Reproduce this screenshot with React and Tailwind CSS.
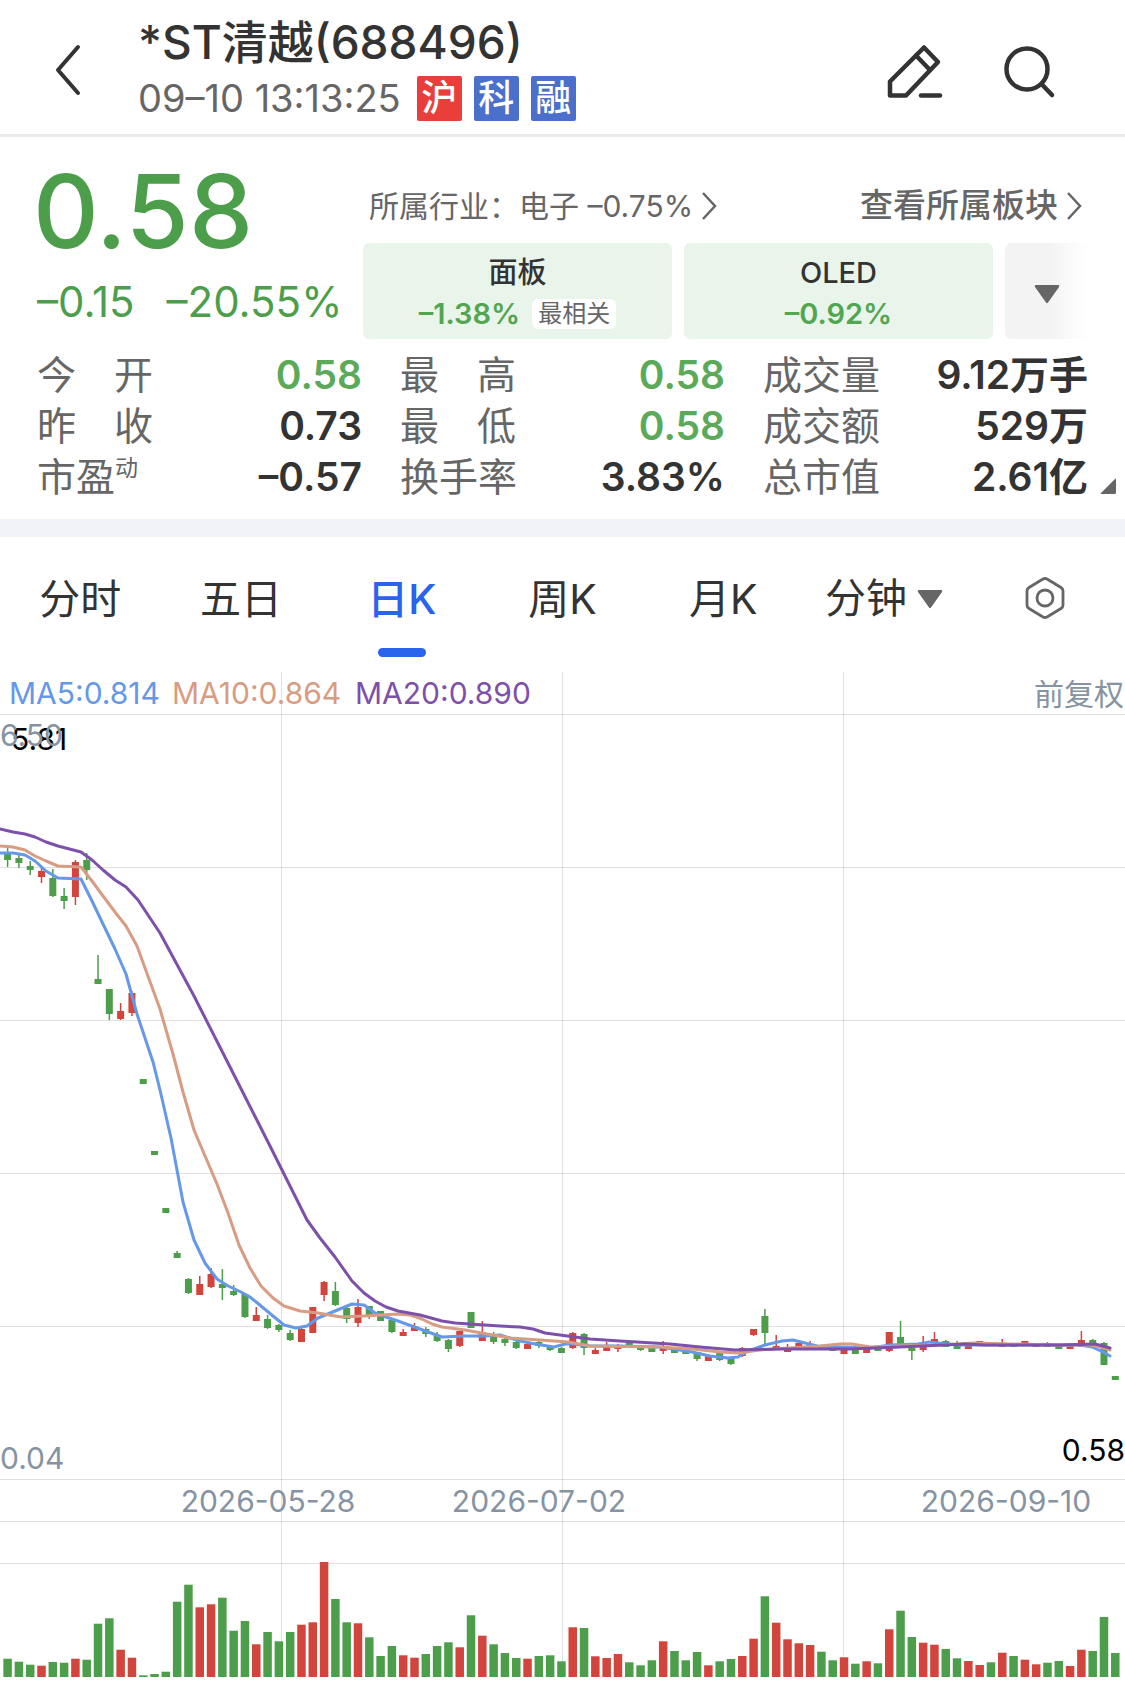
import React, { useState } from 'react';

const STEP = 11.303;
const FIRST_X = 7.6;
const VOLUME_BASE = 1005;

const quotes = [
  { label: ['今', '开'], value: '0.58', down: true },
  { label: ['最', '高'], value: '0.58', down: true },
  { label: ['成', '交', '量'], value: '9.12万手' },
  { label: ['昨', '收'], value: '0.73' },
  { label: ['最', '低'], value: '0.58', down: true },
  { label: ['成', '交', '额'], value: '529万' },
  { label: ['市', '盈'], sup: '动', value: '–0.57' },
  { label: ['换', '手', '率'], value: '3.83%' },
  { label: ['总', '市', '值'], value: '2.61亿' },
];

const tabs = ['分时', '五日', '日K', '周K', '月K'];

// direction, high, body top, body bottom, low, volume
const candles = [
  ['g', 176, 182, 188, 195, 18.3], ['g', 183, 186, 191, 196, 15.3], ['g', 189, 194, 198, 203, 12.3],
  ['r', 195, 199, 205, 211, 11.3], ['g', 197, 206, 224, 225, 15], ['g', 216, 224, 229, 237, 14.3],
  ['r', 188, 190, 225, 233, 18.3], ['g', 181, 188, 198, 208, 17.3], ['g', 283, 307, 312, 312, 53.3],
  ['g', 317, 317, 342, 348, 58.7], ['r', 331, 339, 347, 348, 27.3], ['r', 319, 321, 341, 344, 19.3],
  ['g', 407, 407, 412, 412, 1.7], ['g', 479, 479, 483, 483, 3], ['g', 536, 536, 541, 541, 5.3],
  ['g', 579, 581, 586, 586, 75.3], ['g', 606, 607, 621, 622, 92.3], ['r', 604, 612, 623, 623, 69.7],
  ['r', 596, 602, 615, 616, 72.7], ['g', 597, 612, 616, 628, 79.3], ['g', 613, 619, 623, 624, 46.3],
  ['g', 621, 622, 645, 646, 56], ['r', 635, 643, 649, 649, 32.7], ['g', 643, 647, 656, 657, 45],
  ['g', 652, 653, 658, 660, 35.7], ['g', 658, 661, 668, 669, 45], ['r', 656, 657, 670, 670, 52.3],
  ['r', 635, 635, 661, 661, 54.7], ['r', 609, 610, 623, 629, 115], ['g', 610, 619, 633, 634, 78],
  ['g', 635, 636, 647, 651, 54.7], ['r', 627, 635, 651, 655, 53.7], ['g', 634, 634, 645, 647, 39.7],
  ['g', 639, 639, 649, 649, 21], ['g', 646, 648, 660, 661, 31], ['r', 657, 660, 664, 664, 21.7],
  ['r', 651, 654, 659, 659, 19.3], ['g', 655, 657, 662, 665, 23], ['g', 660, 663, 669, 670, 31],
  ['g', 667, 668, 677, 680, 34.7], ['r', 659, 659, 674, 675, 29.7], ['g', 640, 640, 656, 656, 61.7],
  ['r', 649, 660, 669, 669, 41.3], ['g', 660, 664, 670, 672, 32.7], ['g', 666, 667, 671, 674, 24],
  ['g', 669, 670, 676, 677, 19], ['r', 669, 672, 677, 677, 18.3], ['g', 669, 670, 674, 676, 21],
  ['g', 673, 674, 678, 679, 21.7], ['g', 675, 676, 681, 681, 15.7], ['r', 660, 661, 676, 677, 49.7],
  ['g', 661, 662, 676, 683, 49], ['r', 676, 678, 682, 682, 20.7], ['r', 670, 675, 679, 679, 19],
  ['r', 672, 673, 677, 680, 23], ['g', 670, 671, 675, 675, 14.7], ['g', 674, 674, 678, 679, 11.7],
  ['g', 675, 675, 680, 680, 16.7], ['r', 669, 676, 679, 682, 35.7], ['g', 676, 676, 681, 681, 26],
  ['g', 678, 678, 682, 682, 16.7], ['g', 680, 680, 687, 689, 25], ['r', 682, 684, 689, 689, 11.7],
  ['g', 681, 681, 688, 689, 15.7], ['g', 685, 687, 692, 693, 18], ['r', 675, 676, 684, 685, 21],
  ['r', 657, 657, 663, 664, 38.3], ['g', 637, 644, 661, 673, 80.7], ['r', 663, 674, 677, 677, 54.3],
  ['r', 672, 676, 680, 680, 37.7], ['r', 670, 671, 675, 675, 33.7], ['r', 669, 672, 675, 675, 32],
  ['g', 675, 675, 678, 678, 25.3], ['g', 675, 675, 679, 679, 16.7], ['r', 677, 677, 682, 682, 19.7],
  ['g', 677, 677, 682, 682, 13.3], ['r', 676, 676, 681, 681, 15.7], ['g', 675, 675, 679, 679, 13.7],
  ['r', 660, 660, 679, 680, 47.7], ['g', 649, 665, 673, 673, 66.3], ['g', 676, 676, 679, 688, 40],
  ['r', 664, 674, 678, 680, 34.3], ['r', 660, 667, 671, 671, 32.3], ['g', 668, 669, 675, 675, 28],
  ['g', 669, 673, 677, 677, 18.7], ['r', 672, 672, 677, 677, 16], ['r', 669, 669, 672, 672, 12],
  ['g', 670, 670, 673, 673, 14.7], ['r', 667, 672, 675, 675, 24.3], ['g', 671, 671, 675, 675, 21],
  ['r', 669, 669, 672, 672, 17.3], ['r', 672, 672, 675, 675, 12.7], ['g', 670, 671, 675, 675, 14.3],
  ['g', 672, 672, 677, 677, 16], ['r', 673, 673, 677, 677, 11], ['r', 659, 668, 675, 675, 27.3],
  ['g', 667, 668, 672, 672, 26], ['g', 670, 671, 693, 693, 60], ['g', 704, 704, 708, 708, 24],
];

const ma5 =
  '0,181 13,181 25,183 35,189 46,199 58,206 81,207 92,229 103,252 115,277 126,302 137,342 153,390 160,418 171,466 183,530 194,568 205,591 217,607 228,614 239,619 250,625 261,634 273,644 284,653 296,656 307,654 318,646 335,639 352,632 364,633 375,641 386,645 398,649 409,653 420,657 431,661 442,665 465,664 485,664 500,663 520,669 535,672 554,675 565,672 573,672 590,674 620,674 660,675 692,680 710,684 728,686 738,685 748,679 765,673 782,669 793,668 805,671 817,674 840,675 870,676 890,673 918,672 929,670 938,671 960,673 1080,673 1092,675 1103,680 1110,684';

const ma10 =
  '0,174 13,175 25,178 35,184 46,189 58,194 81,195 92,209 103,224 115,240 126,254 137,274 149,307 160,337 173,382 183,420 194,458 205,484 217,512 228,541 239,573 250,596 261,614 273,626 284,634 300,639 318,641 341,645 364,644 398,642 410,643 422,647 432,652 442,655 465,658 487,662 510,666 540,668 568,670 590,674 660,675 692,677 720,680 738,681 760,678 790,676 820,674 840,672 852,672 870,675 900,674 940,673 975,671 1010,672 1060,673 1090,673 1100,675 1110,678';

const ma20 =
  '0,157 13,160 25,162 35,165 46,170 58,174 81,180 92,188 103,198 115,208 126,215 138,228 160,261 194,324 228,391 270,474 282,498 307,548 320,566 335,585 352,609 364,621 375,629 386,635 398,639 420,643 442,649 455,651 500,654 520,655 533,657 545,661 560,663 590,667 620,669 670,672 700,675 735,678 780,677 850,677 900,675 965,672 985,673 1060,673 1095,672 1110,676';

const color = (dir) => (dir === 'g' ? '#4d9e4b' : '#d1453d');

const ChevronRight = () => (
  <svg width="16" height="30" viewBox="0 0 16 30" fill="none" stroke="#666" strokeWidth="2.5">
    <path d="M2 2 L14 15 L2 28" />
  </svg>
);

const Caret = () => (
  <svg width="26" height="19" viewBox="0 0 26 19" fill="#666">
    <path d="M2 0 H24 Q26 0 25 2 L14 17.500 Q13 19 12 17.500 L1 2 Q0 0 2 0 Z" />
  </svg>
);

const Header = () => (
  <header className="flex items-center h-[137px] pt-[6px] border-b-3 border-[#ebebeb] pl-[52px] pr-[68px]">
    <button type="button" aria-label="返回" className="shrink-0">
      <svg width="30" height="54" viewBox="0 0 30 54" fill="none" stroke="#333" strokeWidth="4" strokeLinecap="round" strokeLinejoin="round">
        <path d="M26 4 L6 27 L26 50" />
      </svg>
    </button>
    <div className="flex-1 ml-[56px]">
      <h1 className="text-[46px] leading-[56px] font-medium text-[#333]">*ST清越(688496)</h1>
      <div className="flex items-center gap-3 leading-[56px]">
        <span className="text-[38px] text-[#666] mr-1">09–10 13:13:25</span>
        <span className="size-[45px] rounded-xs bg-[#e93e3a] text-white text-[36px] leading-[44px] text-center font-medium">沪</span>
        <span className="size-[45px] rounded-xs bg-[#4a70cc] text-white text-[36px] leading-[44px] text-center font-medium">科</span>
        <span className="size-[45px] rounded-xs bg-[#4a70cc] text-white text-[36px] leading-[44px] text-center font-medium">融</span>
      </div>
    </div>
    <div className="flex items-center gap-14">
      <button type="button" aria-label="编辑">
        <svg width="64" height="60" viewBox="0 0 64 60" fill="none" stroke="#333" strokeWidth="4.500" strokeLinecap="round" strokeLinejoin="round">
          <path d="M43 7.500 L57 22 L25 55.500 H9 V41.500 Z" />
          <path d="M35 15.500 L49 30" />
          <path d="M40 55.500 H59" />
        </svg>
      </button>
      <button type="button" aria-label="搜索">
        <svg width="56" height="60" viewBox="0 0 56 60" fill="none" stroke="#333" strokeWidth="4.500" strokeLinecap="round">
          <circle cx="26" cy="29" r="20.500" />
          <path d="M40.500 44 L51 55" />
        </svg>
      </button>
    </div>
  </header>
);

const Summary = () => (
  <section className="relative h-[382px] pl-[37px]">
    <div className="flex">
      <div className="w-[326px] shrink-0 pt-[18px] text-[#4d9e4b]">
        <div className="text-[102px] leading-[112px] font-medium -ml-1">0.58</div>
        <div className="flex gap-8 text-[42px] leading-[70px]">
          <span>–0.15</span>
          <span>–20.55%</span>
        </div>
      </div>
      <div className="flex-1 min-w-0 pt-[44px]">
        <div className="flex items-center justify-between h-[50px] pl-[6px] pr-[43px] text-[#666]">
          <a href="#industry" className="flex items-center gap-2 text-[30px]">
            所属行业：电子 –0.75%
            <ChevronRight />
          </a>
          <a href="#boards" className="flex items-center gap-2 text-[33px] font-medium">
            查看所属板块
            <ChevronRight />
          </a>
        </div>
        <div className="flex gap-3 mt-3 h-[96px] pr-[36px]">
          <button type="button" className="flex-1 rounded-md bg-[#e9f4eb] pt-[6px] text-[#333]">
            <span className="block text-[29px] leading-[40px] font-medium">面板</span>
            <span className="flex items-center justify-center gap-3 leading-[42px]">
              <span className="text-[29px] font-semibold text-[#52a551]">–1.38%</span>
              <span className="rounded-md bg-white px-[6px] text-[24px] leading-[30px] text-[#666]">最相关</span>
            </span>
          </button>
          <button type="button" className="flex-1 rounded-md bg-[#e9f4eb] pt-[6px] text-[#333]">
            <span className="block text-[29px] leading-[40px] font-medium">OLED</span>
            <span className="block text-[29px] leading-[42px] font-semibold text-[#52a551]">–0.92%</span>
          </button>
          <button type="button" aria-label="展开" className="flex items-center justify-center w-[84px] pt-[6px] rounded-l-md bg-linear-to-r from-[#f3f3f3] from-50% to-white">
            <Caret />
          </button>
        </div>
      </div>
    </div>
    <dl className="grid grid-cols-3 gap-x-[38px] mt-[10px] pr-[37px] text-[39px] leading-[51px]">
      {quotes.map((q) => (
        <div key={q.label.join('')} className="flex justify-between">
          <dt className={`flex text-[#666] ${q.label.length === 2 && !q.sup ? 'w-[116px] justify-between' : ''}`}>
            {q.label.map((ch) => (
              <span key={ch}>{ch}</span>
            ))}
            {q.sup && <span className="text-[23px] leading-[34px]">{q.sup}</span>}
          </dt>
          <dd className={`font-semibold ${q.down ? 'text-[#5aaa5a]' : 'text-[#333]'}`}>{q.value}</dd>
        </div>
      ))}
    </dl>
    <svg className="absolute right-[9px] bottom-[25px]" width="16" height="16" viewBox="0 0 16 16" fill="#666">
      <path d="M16 1 V14.500 Q16 16 14.500 16 H1 Q0 16 1 15 L15 1 Q16 0 16 1 Z" />
    </svg>
  </section>
);

const Tabs = () => {
  const [active, setActive] = useState('日K');

  return (
    <nav className="grid grid-cols-7 h-[135px] text-[41px] text-[#333]">
      {tabs.map((tab) => (
        <button
          key={tab}
          type="button"
          onClick={() => setActive(tab)}
          className={`flex flex-col items-center pt-[32px] ${active === tab ? 'text-[#2b64ec] font-medium' : ''}`}
        >
          <span className="leading-[60px]">{tab}</span>
          {active === tab && <span className="w-12 h-[9px] mt-[19px] rounded-full bg-[#2b64ec]" />}
        </button>
      ))}
      <button type="button" className="flex justify-center items-center gap-[10px] pb-[11px]">
        分钟
        <Caret />
      </button>
      <button type="button" aria-label="设置" className="flex justify-center items-center pb-[14px]">
        <svg width="42" height="44" viewBox="0 0 42 44" fill="none" stroke="#666" strokeWidth="2.800" strokeLinejoin="round">
          <path d="M19 3 Q21 2 23 3 L37 11.500 Q39 12.700 39 15 V29 Q39 31.300 37 32.500 L23 41 Q21 42 19 41 L5 32.500 Q3 31.300 3 29 V15 Q3 12.700 5 11.500 Z" />
          <circle cx="21" cy="22" r="8" />
        </svg>
      </button>
    </nav>
  );
};

const Chart = () => (
  <svg className="block w-full h-auto font-[Inter,'Noto_Sans_CJK_SC',sans-serif]" viewBox="0 0 1125 1011" role="img" aria-label="日K线图">
    <g stroke="#000" strokeOpacity="0.120" strokeWidth="1">
      {[42.5, 195.5, 348.5, 501.5, 654.5, 807.5, 849.5, 891.5].map((y) => (
        <line key={y} x1="0" x2="1125" y1={y} y2={y} />
      ))}
      {[281.5, 562.5, 843.5].map((x) => (
        <line key={x} x1={x} x2={x} y1="0" y2={VOLUME_BASE} />
      ))}
    </g>

    {candles.map(([dir, high, top, bottom, low, volume], i) => {
      const x = FIRST_X + i * STEP;
      return (
        <g key={i} fill={color(dir)}>
          <rect x={x - 0.75} y={high} width="1.500" height={low - high} />
          <rect x={x - 3.5} y={top} width="7" height={bottom - top} />
          <rect x={x - 4.25} y={VOLUME_BASE - volume} width="8.500" height={volume} />
        </g>
      );
    })}

    <g fill="none" strokeWidth="3" strokeLinejoin="round" strokeLinecap="round">
      <polyline points={ma5} stroke="#6598e8" />
      <polyline points={ma10} stroke="#d89c82" />
      <polyline points={ma20} stroke="#7d50ab" />
    </g>

    <g fontSize="30">
      <text x="9" y="32" fill="#6598e8">MA5:0.814</text>
      <text x="172" y="32" fill="#d89c82">MA10:0.864</text>
      <text x="355" y="32" fill="#7d50ab">MA20:0.890</text>
      <text x="1124" y="33" fill="#8693a3" textAnchor="end">前复权</text>
      <text x="11" y="78" fill="#000">5.81</text>
      <text x="0" y="74" fill="#8693a3">6.50</text>
      <text x="0" y="797" fill="#8693a3">0.04</text>
      <text x="1125" y="789" fill="#000" textAnchor="end">0.58</text>
      <text x="268" y="840" fill="#8693a3" textAnchor="middle">2026-05-28</text>
      <text x="539" y="840" fill="#8693a3" textAnchor="middle">2026-07-02</text>
      <text x="1006" y="840" fill="#8693a3" textAnchor="middle">2026-09-10</text>
    </g>
  </svg>
);

const App = () => {
  return (
    <main className="bg-white font-[Inter,'Noto_Sans_CJK_SC',sans-serif]">
      <Header />
      <Summary />
      <div className="h-[18px] bg-[#f1f3f8]" />
      <Tabs />
      <Chart />
    </main>
  );
};

export default App;
